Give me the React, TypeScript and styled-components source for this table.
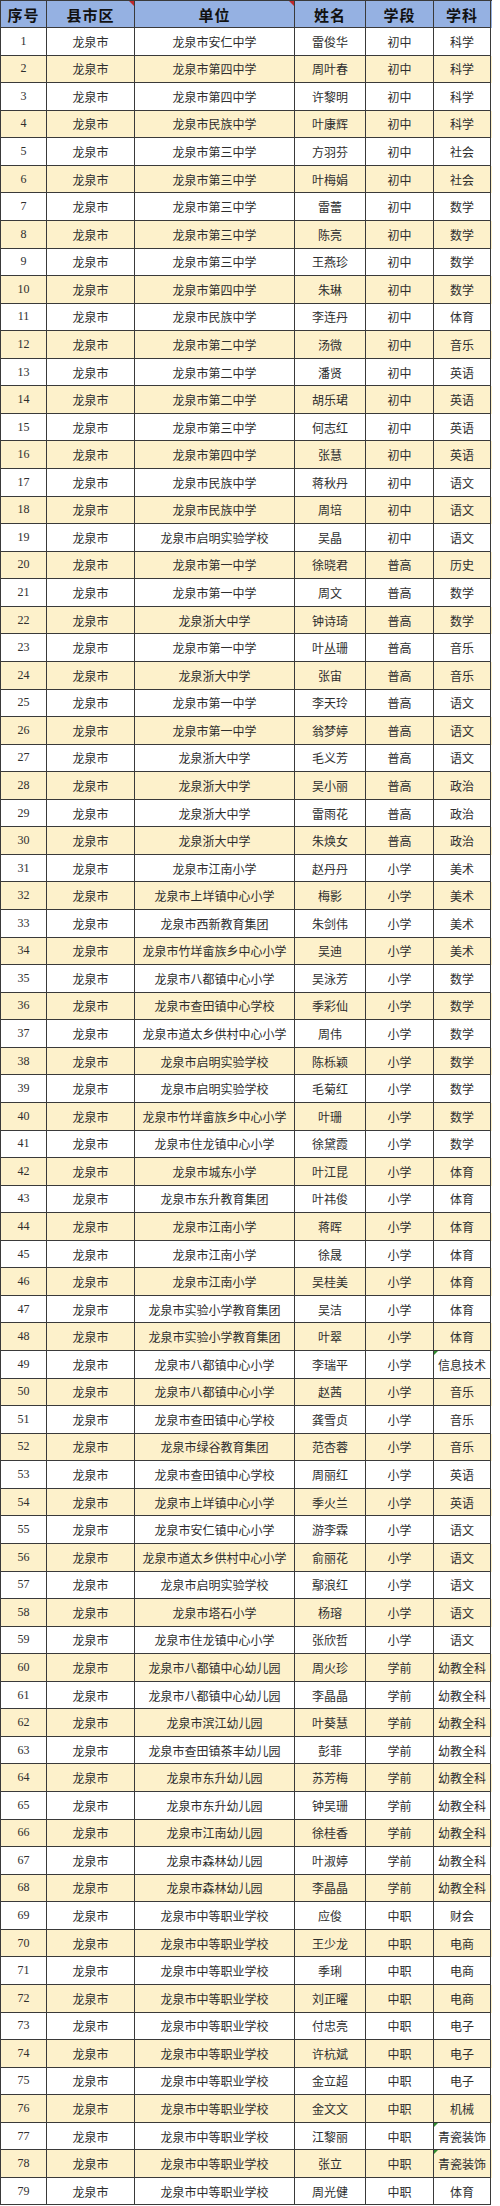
import React from "react";
import styled, { createGlobalStyle } from "styled-components";

const GlobalStyle = createGlobalStyle`
  html, body { margin: 0; padding: 0; background: #ffffff; }
  body { font-family: "Noto Sans CJK SC", "Noto Sans", sans-serif; }
`;

const COLS = "46px 88px 160px 71px 68px 57px";

const Table = styled.div`
  width: 491px;
  border-left: 1px solid #3a3a3a;
  border-top: 1px solid #3a3a3a;
  box-sizing: content-box;
`;

const Row = styled.div<{ $alt?: boolean; $head?: boolean }>`
  display: grid;
  grid-template-columns: ${COLS};
  height: ${(p) => (p.$head ? "27px" : "27.57px")};
  background: ${(p) => (p.$head ? "#95b1e2" : p.$alt ? "#fdf1cb" : "#ffffff")};
`;

const Cell = styled.div<{ $head?: boolean; $num?: boolean }>`
  position: relative;
  display: flex;
  align-items: center;
  justify-content: center;
  box-sizing: border-box;
  border-right: 1px solid #3a3a3a;
  border-bottom: 1px solid #3a3a3a;
  white-space: nowrap;
  overflow: hidden;
  font-family: ${(p) =>
    p.$num && !p.$head
      ? '"Liberation Serif", "Noto Sans CJK SC", serif'
      : '"Noto Sans CJK SC", "Noto Sans", sans-serif'};
  font-size: ${(p) => (p.$head ? "15px" : "12px")};
  font-weight: ${(p) => (p.$head ? 700 : 400)};
  color: ${(p) => (p.$head ? "#111111" : "#2e2e2e")};
  letter-spacing: ${(p) => (p.$head ? "1px" : "0")};
`;

const CommentMark = styled.span`
  position: absolute;
  top: 0;
  right: 0;
  width: 0;
  height: 0;
  border-top: 5px solid #c0282a;
  border-left: 5px solid transparent;
`;

const ErrorMark = styled.span`
  position: absolute;
  top: 0;
  left: 0;
  width: 0;
  height: 0;
  border-top: 4px solid #2f8a2f;
  border-right: 4px solid transparent;
`;

type R = [string, string, string, string];

const data: R[] = [
  ["龙泉市安仁中学", "雷俊华", "初中", "科学"],
  ["龙泉市第四中学", "周叶春", "初中", "科学"],
  ["龙泉市第四中学", "许黎明", "初中", "科学"],
  ["龙泉市民族中学", "叶康辉", "初中", "科学"],
  ["龙泉市第三中学", "方羽芬", "初中", "社会"],
  ["龙泉市第三中学", "叶梅娟", "初中", "社会"],
  ["龙泉市第三中学", "雷蕾", "初中", "数学"],
  ["龙泉市第三中学", "陈亮", "初中", "数学"],
  ["龙泉市第三中学", "王燕珍", "初中", "数学"],
  ["龙泉市第四中学", "朱琳", "初中", "数学"],
  ["龙泉市民族中学", "李连丹", "初中", "体育"],
  ["龙泉市第二中学", "汤微", "初中", "音乐"],
  ["龙泉市第二中学", "潘贤", "初中", "英语"],
  ["龙泉市第二中学", "胡乐珺", "初中", "英语"],
  ["龙泉市第三中学", "何志红", "初中", "英语"],
  ["龙泉市第四中学", "张慧", "初中", "英语"],
  ["龙泉市民族中学", "蒋秋丹", "初中", "语文"],
  ["龙泉市民族中学", "周培", "初中", "语文"],
  ["龙泉市启明实验学校", "吴晶", "初中", "语文"],
  ["龙泉市第一中学", "徐晓君", "普高", "历史"],
  ["龙泉市第一中学", "周文", "普高", "数学"],
  ["龙泉浙大中学", "钟诗琦", "普高", "数学"],
  ["龙泉市第一中学", "叶丛珊", "普高", "音乐"],
  ["龙泉浙大中学", "张宙", "普高", "音乐"],
  ["龙泉市第一中学", "李天玲", "普高", "语文"],
  ["龙泉市第一中学", "翁梦婷", "普高", "语文"],
  ["龙泉浙大中学", "毛义芳", "普高", "语文"],
  ["龙泉浙大中学", "吴小丽", "普高", "政治"],
  ["龙泉浙大中学", "雷雨花", "普高", "政治"],
  ["龙泉浙大中学", "朱焕女", "普高", "政治"],
  ["龙泉市江南小学", "赵丹丹", "小学", "美术"],
  ["龙泉市上垟镇中心小学", "梅影", "小学", "美术"],
  ["龙泉市西新教育集团", "朱剑伟", "小学", "美术"],
  ["龙泉市竹垟畲族乡中心小学", "吴迪", "小学", "美术"],
  ["龙泉市八都镇中心小学", "吴泳芳", "小学", "数学"],
  ["龙泉市查田镇中心学校", "季彩仙", "小学", "数学"],
  ["龙泉市道太乡供村中心小学", "周伟", "小学", "数学"],
  ["龙泉市启明实验学校", "陈栎颖", "小学", "数学"],
  ["龙泉市启明实验学校", "毛菊红", "小学", "数学"],
  ["龙泉市竹垟畲族乡中心小学", "叶珊", "小学", "数学"],
  ["龙泉市住龙镇中心小学", "徐黛霞", "小学", "数学"],
  ["龙泉市城东小学", "叶江昆", "小学", "体育"],
  ["龙泉市东升教育集团", "叶祎俊", "小学", "体育"],
  ["龙泉市江南小学", "蒋晖", "小学", "体育"],
  ["龙泉市江南小学", "徐晟", "小学", "体育"],
  ["龙泉市江南小学", "吴桂美", "小学", "体育"],
  ["龙泉市实验小学教育集团", "吴洁", "小学", "体育"],
  ["龙泉市实验小学教育集团", "叶翠", "小学", "体育"],
  ["龙泉市八都镇中心小学", "李瑞平", "小学", "信息技术"],
  ["龙泉市八都镇中心小学", "赵茜", "小学", "音乐"],
  ["龙泉市查田镇中心学校", "龚雪贞", "小学", "音乐"],
  ["龙泉市绿谷教育集团", "范杏蓉", "小学", "音乐"],
  ["龙泉市查田镇中心学校", "周丽红", "小学", "英语"],
  ["龙泉市上垟镇中心小学", "季火兰", "小学", "英语"],
  ["龙泉市安仁镇中心小学", "游李霖", "小学", "语文"],
  ["龙泉市道太乡供村中心小学", "俞丽花", "小学", "语文"],
  ["龙泉市启明实验学校", "鄢浪红", "小学", "语文"],
  ["龙泉市塔石小学", "杨瑢", "小学", "语文"],
  ["龙泉市住龙镇中心小学", "张欣哲", "小学", "语文"],
  ["龙泉市八都镇中心幼儿园", "周火珍", "学前", "幼教全科"],
  ["龙泉市八都镇中心幼儿园", "李晶晶", "学前", "幼教全科"],
  ["龙泉市滨江幼儿园", "叶葵慧", "学前", "幼教全科"],
  ["龙泉市查田镇茶丰幼儿园", "彭菲", "学前", "幼教全科"],
  ["龙泉市东升幼儿园", "苏芳梅", "学前", "幼教全科"],
  ["龙泉市东升幼儿园", "钟吴珊", "学前", "幼教全科"],
  ["龙泉市江南幼儿园", "徐桂香", "学前", "幼教全科"],
  ["龙泉市森林幼儿园", "叶淑婷", "学前", "幼教全科"],
  ["龙泉市森林幼儿园", "李晶晶", "学前", "幼教全科"],
  ["龙泉市中等职业学校", "应俊", "中职", "财会"],
  ["龙泉市中等职业学校", "王少龙", "中职", "电商"],
  ["龙泉市中等职业学校", "季琍", "中职", "电商"],
  ["龙泉市中等职业学校", "刘正曜", "中职", "电商"],
  ["龙泉市中等职业学校", "付忠亮", "中职", "电子"],
  ["龙泉市中等职业学校", "许杭斌", "中职", "电子"],
  ["龙泉市中等职业学校", "金立超", "中职", "电子"],
  ["龙泉市中等职业学校", "金文文", "中职", "机械"],
  ["龙泉市中等职业学校", "江黎丽", "中职", "青瓷装饰"],
  ["龙泉市中等职业学校", "张立", "中职", "青瓷装饰"],
  ["龙泉市中等职业学校", "周光健", "中职", "体育"],
];

const flagged = new Set([49, 77, 78]);

export default function App() {
  return (
    <>
      <GlobalStyle />
      <Table>
        <Row $head>
          <Cell $head>序号</Cell>
          <Cell $head>
            县市区
            <CommentMark />
          </Cell>
          <Cell $head>
            单位
            <CommentMark />
          </Cell>
          <Cell $head>姓名</Cell>
          <Cell $head>学段</Cell>
          <Cell $head>学科</Cell>
        </Row>
        {data.map((r, i) => {
          const n = i + 1;
          return (
            <Row key={n} $alt={n % 2 === 0}>
              <Cell $num>{n}</Cell>
              <Cell>龙泉市</Cell>
              <Cell>{r[0]}</Cell>
              <Cell>{r[1]}</Cell>
              <Cell>{r[2]}</Cell>
              <Cell>
                {flagged.has(n) && <ErrorMark />}
                {r[3]}
              </Cell>
            </Row>
          );
        })}
      </Table>
    </>
  );
}
